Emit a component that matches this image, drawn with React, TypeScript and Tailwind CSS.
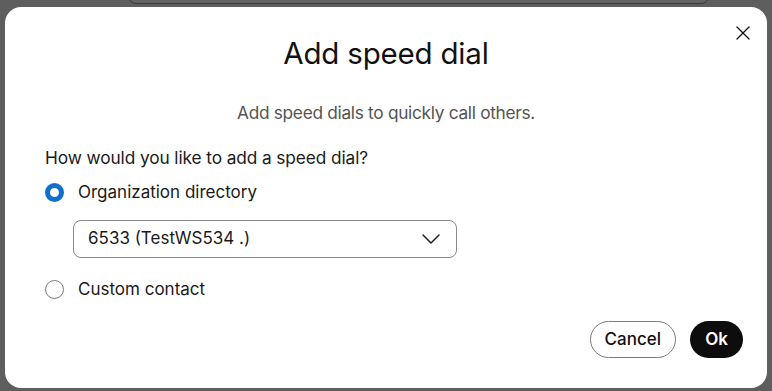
import React, { useState } from 'react';
import { X, ChevronDown } from 'lucide-react';

const App: React.FC = () => {
  const [mode, setMode] = useState<'org' | 'custom'>('org');

  return (
    <div className="w-[772px] h-[391px] bg-[#5e5e5e] overflow-hidden relative font-['Inter',sans-serif]">
      {/* backdrop element peeking at top */}
      <div className="absolute left-[128px] top-[-20px] w-[581px] h-[24px] rounded-b-[8px] border border-[#3a3a3a] bg-[#636363]"></div>

      <div className="absolute left-[5px] top-[7px] w-[762px] h-[381px] bg-white rounded-[16px] flex flex-col">
        <button className="absolute left-[726px] top-[14px] text-[#111]">
          <X className="w-[24px] h-[24px]" strokeWidth={1.3} />
        </button>

        <h2 className="text-center text-[29.5px] leading-[34px] text-[#111] mt-[29px] tracking-[-0.2px]">Add speed dial</h2>
        <p className="text-center text-[17.3px] leading-[20px] text-[#545454] mt-[33px] tracking-[-0.3px]">
          Add speed dials to quickly call others.
        </p>

        <div className="pl-[40px] mt-[25px]">
          <p className="text-[17.3px] leading-[20px] text-[#1a1a1a] tracking-[-0.1px]">How would you like to add a speed dial?</p>

          <label className="flex items-center mt-[14px] cursor-pointer" onClick={() => setMode('org')}>
            <span
              className={
                mode === 'org'
                  ? 'w-[19px] h-[19px] rounded-full border-[5px] border-[#1170cf] bg-white'
                  : 'w-[19px] h-[19px] rounded-full border border-[#7a7a7a] bg-white'
              }
            ></span>
            <span className="ml-[14px] text-[17px] leading-[20px] text-[#1a1a1a]">Organization directory</span>
          </label>

          <div className="ml-[28px] mt-[18px] w-[384px] h-[38px] rounded-[8px] border border-[#8a8a8a] flex items-center justify-between pl-[14px] pr-[9px]">
            <span className="text-[17px] text-[#1a1a1a]">6533 (TestWS534 .)</span>
            <ChevronDown className="w-[32px] h-[32px] text-[#222]" strokeWidth={1.15} />
          </div>

          <label className="flex items-center mt-[21px] cursor-pointer" onClick={() => setMode('custom')}>
            <span
              className={
                mode === 'custom'
                  ? 'w-[19px] h-[19px] rounded-full border-[5px] border-[#1170cf] bg-white'
                  : 'w-[19px] h-[19px] rounded-full border border-[#7a7a7a] bg-white'
              }
            ></span>
            <span className="ml-[14px] text-[17px] leading-[20px] text-[#1a1a1a]">Custom contact</span>
          </label>
        </div>

        <div className="flex justify-end gap-[14px] pr-[24px] mt-[22px]">
          <button className="h-[37px] px-[14px] rounded-full border border-[#7a7a7a] text-[17px] text-[#111] font-medium">
            Cancel
          </button>
          <button className="h-[37px] w-[53px] rounded-full bg-[#0d0d0d] text-white text-[17px] font-semibold">
            Ok
          </button>
        </div>
      </div>
    </div>
  );
};

export default App;
